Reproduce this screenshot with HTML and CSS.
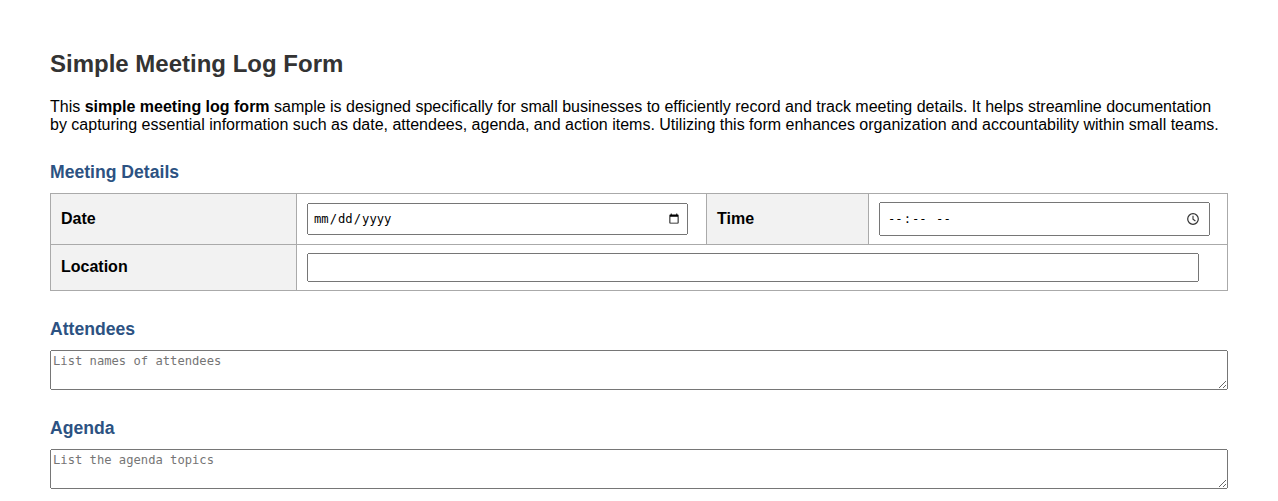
FILE: index.html
```html
<!DOCTYPE html>
<html lang="en">
<head>
<meta charset="utf-8">
<title>Simple Meeting Log Form</title>
<link rel="stylesheet" href="styles.css">
</head>
<body>
<h1 class="title">Simple Meeting Log Form</h1>
<p class="intro">This <strong>simple meeting log form</strong> sample is designed specifically for small businesses to efficiently record and track meeting details. It helps streamline documentation by capturing essential information such as date, attendees, agenda, and action items. Utilizing this form enhances organization and accountability within small teams.</p>
<h2 class="section">Meeting Details</h2>
<table class="details">
  <colgroup>
    <col class="col-label">
    <col class="col-date">
    <col class="col-time-label">
    <col>
  </colgroup>
  <tr>
    <th>Date</th>
    <td><input class="field field-date" type="date"></td>
    <th>Time</th>
    <td><input class="field field-time" type="time"></td>
  </tr>
  <tr>
    <th class="label-raised">Location</th>
    <td colspan="3"><input class="field field-text" type="text"></td>
  </tr>
</table>
<h2 class="section section-next">Attendees</h2>
<textarea class="notes" placeholder="List names of attendees"></textarea>
<h2 class="section section-next">Agenda</h2>
<textarea class="notes" placeholder="List the agenda topics"></textarea>
</body>
</html>
```
FILE: styles.css
```css
html, body {
  margin: 0;
  padding: 0;
}
body {
  padding: 50px 50px 0;
  font-family: "Liberation Sans", Arial, sans-serif;
  font-size: 16px;
  color: #000;
  background: #fff;
}
.title {
  margin: 0 0 20px;
  font-size: 24px;
  line-height: 28px;
  font-weight: bold;
  color: #333;
}
.intro {
  margin: 0 0 28px;
  font-size: 16px;
  line-height: 18px;
}
.section {
  margin: 0 0 10px;
  font-size: 17.6px;
  line-height: 21px;
  font-weight: bold;
  color: #2c5282;
}
.section-next {
  margin-top: 28px;
}
.details {
  width: 100%;
  table-layout: fixed;
  border-collapse: collapse;
}
.col-label { width: 246px; }
.col-date { width: 410px; }
.col-time-label { width: 162px; }
.details th, .details td {
  border: 1px solid #aaa;
  padding: 8px 10px;
  text-align: left;
}
.details th {
  background: #f2f2f2;
  font-weight: bold;
}
.details .label-raised {
  padding-bottom: 10px;
}
.field {
  box-sizing: border-box;
  display: block;
  width: 98%;
  margin: 0;
  font-family: "DejaVu Sans Mono", monospace;
  font-size: 12.2px;
}
.field-date { height: 32px; padding: 4px; }
.field-time { height: 34px; padding: 6px; }
.field-time::-webkit-calendar-picker-indicator {
  background: url("data:image/svg+xml,%3Csvg xmlns='http://www.w3.org/2000/svg' viewBox='0 0 16 16'%3E%3Ccircle cx='8' cy='8' r='5.3' fill='none' stroke='%23333' stroke-width='1.2'/%3E%3Cpath d='M8 4.8V8.2L10.4 10' fill='none' stroke='%23333' stroke-width='1.1'/%3E%3C/svg%3E") center / 16px 16px no-repeat;
  margin-left: 2px;
  margin-right: 0;
}
.field-text { height: 29px; padding: 6px; }
.notes {
  box-sizing: border-box;
  display: block;
  width: 100%;
  height: 40px;
  margin: 0;
  font-family: "DejaVu Sans Mono", monospace;
  font-size: 12.17px;
  line-height: 16px;
}
```
